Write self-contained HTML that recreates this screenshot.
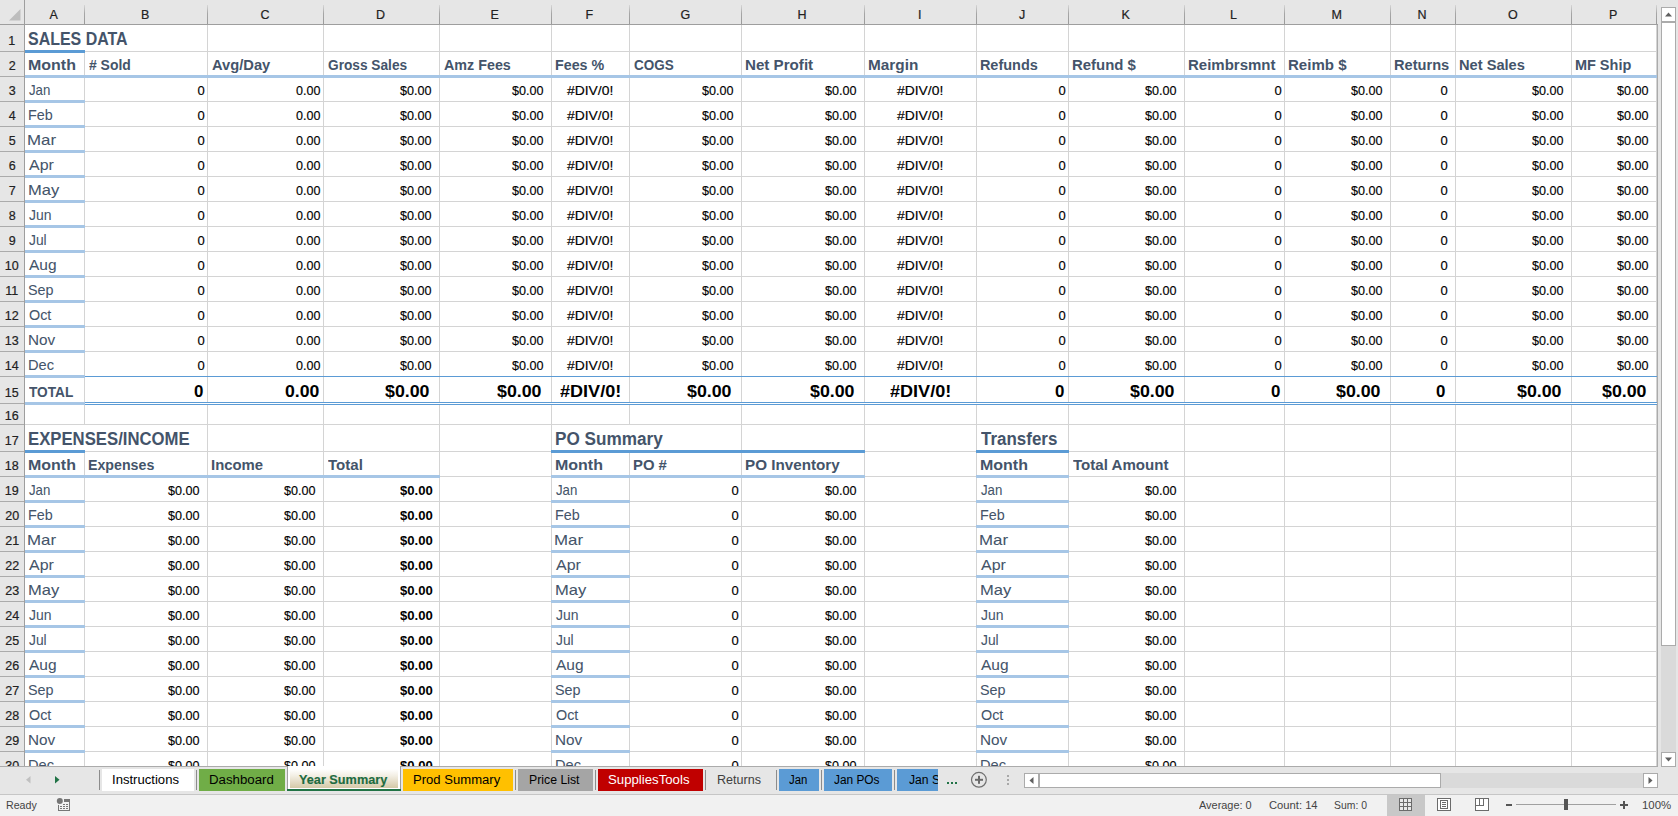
<!DOCTYPE html><html><head><meta charset="utf-8"><style>
*{margin:0;padding:0;box-sizing:border-box}
html,body{width:1678px;height:816px;overflow:hidden;background:#E6E6E6;font-family:"Liberation Sans", sans-serif}
body{position:relative}
div{position:absolute}
svg{position:absolute}
.t{position:absolute;white-space:nowrap;line-height:1;display:block;transform-origin:0 0}
</style></head><body><div style="left:25px;top:25px;width:1632px;height:741px;background:#fff"></div>
<div style="left:84px;top:25px;width:1px;height:741px;background:#D4D4D4"></div>
<div style="left:207px;top:25px;width:1px;height:741px;background:#D4D4D4"></div>
<div style="left:323px;top:25px;width:1px;height:741px;background:#D4D4D4"></div>
<div style="left:439px;top:25px;width:1px;height:741px;background:#D4D4D4"></div>
<div style="left:551px;top:25px;width:1px;height:741px;background:#D4D4D4"></div>
<div style="left:629px;top:25px;width:1px;height:741px;background:#D4D4D4"></div>
<div style="left:741px;top:25px;width:1px;height:741px;background:#D4D4D4"></div>
<div style="left:864px;top:25px;width:1px;height:741px;background:#D4D4D4"></div>
<div style="left:976px;top:25px;width:1px;height:741px;background:#D4D4D4"></div>
<div style="left:1068px;top:25px;width:1px;height:741px;background:#D4D4D4"></div>
<div style="left:1184px;top:25px;width:1px;height:741px;background:#D4D4D4"></div>
<div style="left:1284px;top:25px;width:1px;height:741px;background:#D4D4D4"></div>
<div style="left:1390px;top:25px;width:1px;height:741px;background:#D4D4D4"></div>
<div style="left:1455px;top:25px;width:1px;height:741px;background:#D4D4D4"></div>
<div style="left:1571px;top:25px;width:1px;height:741px;background:#D4D4D4"></div>
<div style="left:1656px;top:25px;width:1px;height:741px;background:#D4D4D4"></div>
<div style="left:25px;top:51px;width:1632px;height:1px;background:#D4D4D4"></div>
<div style="left:25px;top:76px;width:1632px;height:1px;background:#D4D4D4"></div>
<div style="left:25px;top:101px;width:1632px;height:1px;background:#D4D4D4"></div>
<div style="left:25px;top:126px;width:1632px;height:1px;background:#D4D4D4"></div>
<div style="left:25px;top:151px;width:1632px;height:1px;background:#D4D4D4"></div>
<div style="left:25px;top:176px;width:1632px;height:1px;background:#D4D4D4"></div>
<div style="left:25px;top:201px;width:1632px;height:1px;background:#D4D4D4"></div>
<div style="left:25px;top:226px;width:1632px;height:1px;background:#D4D4D4"></div>
<div style="left:25px;top:251px;width:1632px;height:1px;background:#D4D4D4"></div>
<div style="left:25px;top:276px;width:1632px;height:1px;background:#D4D4D4"></div>
<div style="left:25px;top:301px;width:1632px;height:1px;background:#D4D4D4"></div>
<div style="left:25px;top:326px;width:1632px;height:1px;background:#D4D4D4"></div>
<div style="left:25px;top:351px;width:1632px;height:1px;background:#D4D4D4"></div>
<div style="left:25px;top:376px;width:1632px;height:1px;background:#D4D4D4"></div>
<div style="left:25px;top:403px;width:1632px;height:1px;background:#D4D4D4"></div>
<div style="left:25px;top:424px;width:1632px;height:1px;background:#D4D4D4"></div>
<div style="left:25px;top:451px;width:1632px;height:1px;background:#D4D4D4"></div>
<div style="left:25px;top:476px;width:1632px;height:1px;background:#D4D4D4"></div>
<div style="left:25px;top:501px;width:1632px;height:1px;background:#D4D4D4"></div>
<div style="left:25px;top:526px;width:1632px;height:1px;background:#D4D4D4"></div>
<div style="left:25px;top:551px;width:1632px;height:1px;background:#D4D4D4"></div>
<div style="left:25px;top:576px;width:1632px;height:1px;background:#D4D4D4"></div>
<div style="left:25px;top:601px;width:1632px;height:1px;background:#D4D4D4"></div>
<div style="left:25px;top:626px;width:1632px;height:1px;background:#D4D4D4"></div>
<div style="left:25px;top:651px;width:1632px;height:1px;background:#D4D4D4"></div>
<div style="left:25px;top:676px;width:1632px;height:1px;background:#D4D4D4"></div>
<div style="left:25px;top:701px;width:1632px;height:1px;background:#D4D4D4"></div>
<div style="left:25px;top:726px;width:1632px;height:1px;background:#D4D4D4"></div>
<div style="left:25px;top:751px;width:1632px;height:1px;background:#D4D4D4"></div>
<div style="left:1657px;top:24px;width:1px;height:742px;background:#ABABAB"></div>
<div style="left:84px;top:25px;width:1px;height:25px;background:#fff"></div>
<div style="left:84px;top:425px;width:1px;height:25px;background:#fff"></div>
<div style="left:629px;top:425px;width:1px;height:25px;background:#fff"></div>
<div style="left:0px;top:0px;width:1657px;height:24px;background:#E6E6E6"></div>
<div style="left:0px;top:24px;width:1658px;height:1px;background:#9E9E9E"></div>
<svg style="left:0;top:0" width="24" height="24"><polygon points="20.5,9 20.5,20.5 9,20.5" fill="#BDBDBD"/></svg>
<div style="left:24px;top:0px;width:1px;height:24px;background:#9E9E9E"></div>
<div style="left:84px;top:5px;width:1px;height:19px;background:linear-gradient(#D6D6D6,#A6A6A6 45%,#9A9A9A)"></div>
<div style="left:207px;top:5px;width:1px;height:19px;background:linear-gradient(#D6D6D6,#A6A6A6 45%,#9A9A9A)"></div>
<div style="left:323px;top:5px;width:1px;height:19px;background:linear-gradient(#D6D6D6,#A6A6A6 45%,#9A9A9A)"></div>
<div style="left:439px;top:5px;width:1px;height:19px;background:linear-gradient(#D6D6D6,#A6A6A6 45%,#9A9A9A)"></div>
<div style="left:551px;top:5px;width:1px;height:19px;background:linear-gradient(#D6D6D6,#A6A6A6 45%,#9A9A9A)"></div>
<div style="left:629px;top:5px;width:1px;height:19px;background:linear-gradient(#D6D6D6,#A6A6A6 45%,#9A9A9A)"></div>
<div style="left:741px;top:5px;width:1px;height:19px;background:linear-gradient(#D6D6D6,#A6A6A6 45%,#9A9A9A)"></div>
<div style="left:864px;top:5px;width:1px;height:19px;background:linear-gradient(#D6D6D6,#A6A6A6 45%,#9A9A9A)"></div>
<div style="left:976px;top:5px;width:1px;height:19px;background:linear-gradient(#D6D6D6,#A6A6A6 45%,#9A9A9A)"></div>
<div style="left:1068px;top:5px;width:1px;height:19px;background:linear-gradient(#D6D6D6,#A6A6A6 45%,#9A9A9A)"></div>
<div style="left:1184px;top:5px;width:1px;height:19px;background:linear-gradient(#D6D6D6,#A6A6A6 45%,#9A9A9A)"></div>
<div style="left:1284px;top:5px;width:1px;height:19px;background:linear-gradient(#D6D6D6,#A6A6A6 45%,#9A9A9A)"></div>
<div style="left:1390px;top:5px;width:1px;height:19px;background:linear-gradient(#D6D6D6,#A6A6A6 45%,#9A9A9A)"></div>
<div style="left:1455px;top:5px;width:1px;height:19px;background:linear-gradient(#D6D6D6,#A6A6A6 45%,#9A9A9A)"></div>
<div style="left:1571px;top:5px;width:1px;height:19px;background:linear-gradient(#D6D6D6,#A6A6A6 45%,#9A9A9A)"></div>
<div style="left:1656px;top:5px;width:1px;height:19px;background:linear-gradient(#D6D6D6,#A6A6A6 45%,#9A9A9A)"></div>
<span class="t" style="left:49.50px;top:9.12px;font-size:12.5px;color:#222;-webkit-text-stroke:0.2px #222;">A</span>
<span class="t" style="left:141.00px;top:9.12px;font-size:12.5px;color:#222;-webkit-text-stroke:0.2px #222;">B</span>
<span class="t" style="left:260.50px;top:9.12px;font-size:12.5px;color:#222;-webkit-text-stroke:0.2px #222;">C</span>
<span class="t" style="left:376.00px;top:9.12px;font-size:12.5px;color:#222;-webkit-text-stroke:0.2px #222;">D</span>
<span class="t" style="left:490.50px;top:9.12px;font-size:12.5px;color:#222;-webkit-text-stroke:0.2px #222;">E</span>
<span class="t" style="left:585.50px;top:9.12px;font-size:12.5px;color:#222;-webkit-text-stroke:0.2px #222;">F</span>
<span class="t" style="left:680.50px;top:9.12px;font-size:12.5px;color:#222;-webkit-text-stroke:0.2px #222;">G</span>
<span class="t" style="left:797.50px;top:9.12px;font-size:12.5px;color:#222;-webkit-text-stroke:0.2px #222;">H</span>
<span class="t" style="left:918.00px;top:9.12px;font-size:12.5px;color:#222;-webkit-text-stroke:0.2px #222;">I</span>
<span class="t" style="left:1019.00px;top:9.12px;font-size:12.5px;color:#222;-webkit-text-stroke:0.2px #222;">J</span>
<span class="t" style="left:1121.50px;top:9.12px;font-size:12.5px;color:#222;-webkit-text-stroke:0.2px #222;">K</span>
<span class="t" style="left:1230.00px;top:9.12px;font-size:12.5px;color:#222;-webkit-text-stroke:0.2px #222;">L</span>
<span class="t" style="left:1331.50px;top:9.12px;font-size:12.5px;color:#222;-webkit-text-stroke:0.2px #222;">M</span>
<span class="t" style="left:1417.50px;top:9.12px;font-size:12.5px;color:#222;-webkit-text-stroke:0.2px #222;">N</span>
<span class="t" style="left:1508.00px;top:9.12px;font-size:12.5px;color:#222;-webkit-text-stroke:0.2px #222;">O</span>
<span class="t" style="left:1609.00px;top:9.12px;font-size:12.5px;color:#222;-webkit-text-stroke:0.2px #222;">P</span>
<div style="left:0px;top:25px;width:24px;height:741px;background:#E6E6E6"></div>
<div style="left:24px;top:0px;width:1px;height:766px;background:#9E9E9E"></div>
<div style="left:0px;top:51px;width:24px;height:1px;background:#ABABAB"></div>
<div style="left:0px;top:76px;width:24px;height:1px;background:#ABABAB"></div>
<div style="left:0px;top:101px;width:24px;height:1px;background:#ABABAB"></div>
<div style="left:0px;top:126px;width:24px;height:1px;background:#ABABAB"></div>
<div style="left:0px;top:151px;width:24px;height:1px;background:#ABABAB"></div>
<div style="left:0px;top:176px;width:24px;height:1px;background:#ABABAB"></div>
<div style="left:0px;top:201px;width:24px;height:1px;background:#ABABAB"></div>
<div style="left:0px;top:226px;width:24px;height:1px;background:#ABABAB"></div>
<div style="left:0px;top:251px;width:24px;height:1px;background:#ABABAB"></div>
<div style="left:0px;top:276px;width:24px;height:1px;background:#ABABAB"></div>
<div style="left:0px;top:301px;width:24px;height:1px;background:#ABABAB"></div>
<div style="left:0px;top:326px;width:24px;height:1px;background:#ABABAB"></div>
<div style="left:0px;top:351px;width:24px;height:1px;background:#ABABAB"></div>
<div style="left:0px;top:376px;width:24px;height:1px;background:#ABABAB"></div>
<div style="left:0px;top:403px;width:24px;height:1px;background:#ABABAB"></div>
<div style="left:0px;top:424px;width:24px;height:1px;background:#ABABAB"></div>
<div style="left:0px;top:451px;width:24px;height:1px;background:#ABABAB"></div>
<div style="left:0px;top:476px;width:24px;height:1px;background:#ABABAB"></div>
<div style="left:0px;top:501px;width:24px;height:1px;background:#ABABAB"></div>
<div style="left:0px;top:526px;width:24px;height:1px;background:#ABABAB"></div>
<div style="left:0px;top:551px;width:24px;height:1px;background:#ABABAB"></div>
<div style="left:0px;top:576px;width:24px;height:1px;background:#ABABAB"></div>
<div style="left:0px;top:601px;width:24px;height:1px;background:#ABABAB"></div>
<div style="left:0px;top:626px;width:24px;height:1px;background:#ABABAB"></div>
<div style="left:0px;top:651px;width:24px;height:1px;background:#ABABAB"></div>
<div style="left:0px;top:676px;width:24px;height:1px;background:#ABABAB"></div>
<div style="left:0px;top:701px;width:24px;height:1px;background:#ABABAB"></div>
<div style="left:0px;top:726px;width:24px;height:1px;background:#ABABAB"></div>
<div style="left:0px;top:751px;width:24px;height:1px;background:#ABABAB"></div>
<span class="t" style="left:8.20px;top:34.72px;font-size:12.5px;color:#222;-webkit-text-stroke:0.2px #222;">1</span>
<span class="t" style="left:8.70px;top:59.72px;font-size:12.5px;color:#222;-webkit-text-stroke:0.2px #222;">2</span>
<span class="t" style="left:8.70px;top:84.72px;font-size:12.5px;color:#222;-webkit-text-stroke:0.2px #222;">3</span>
<span class="t" style="left:8.70px;top:109.72px;font-size:12.5px;color:#222;-webkit-text-stroke:0.2px #222;">4</span>
<span class="t" style="left:8.70px;top:134.72px;font-size:12.5px;color:#222;-webkit-text-stroke:0.2px #222;">5</span>
<span class="t" style="left:8.70px;top:159.72px;font-size:12.5px;color:#222;-webkit-text-stroke:0.2px #222;">6</span>
<span class="t" style="left:8.70px;top:184.72px;font-size:12.5px;color:#222;-webkit-text-stroke:0.2px #222;">7</span>
<span class="t" style="left:8.70px;top:209.72px;font-size:12.5px;color:#222;-webkit-text-stroke:0.2px #222;">8</span>
<span class="t" style="left:8.70px;top:234.72px;font-size:12.5px;color:#222;-webkit-text-stroke:0.2px #222;">9</span>
<span class="t" style="left:4.70px;top:259.72px;font-size:12.5px;color:#222;-webkit-text-stroke:0.2px #222;">10</span>
<span class="t" style="left:5.20px;top:284.72px;font-size:12.5px;color:#222;-webkit-text-stroke:0.2px #222;">11</span>
<span class="t" style="left:4.70px;top:309.72px;font-size:12.5px;color:#222;-webkit-text-stroke:0.2px #222;">12</span>
<span class="t" style="left:4.70px;top:334.72px;font-size:12.5px;color:#222;-webkit-text-stroke:0.2px #222;">13</span>
<span class="t" style="left:4.70px;top:359.72px;font-size:12.5px;color:#222;-webkit-text-stroke:0.2px #222;">14</span>
<span class="t" style="left:4.70px;top:386.72px;font-size:12.5px;color:#222;-webkit-text-stroke:0.2px #222;">15</span>
<span class="t" style="left:4.70px;top:410.02px;font-size:12.5px;color:#222;-webkit-text-stroke:0.2px #222;">16</span>
<span class="t" style="left:4.70px;top:434.72px;font-size:12.5px;color:#222;-webkit-text-stroke:0.2px #222;">17</span>
<span class="t" style="left:4.70px;top:459.72px;font-size:12.5px;color:#222;-webkit-text-stroke:0.2px #222;">18</span>
<span class="t" style="left:4.70px;top:484.72px;font-size:12.5px;color:#222;-webkit-text-stroke:0.2px #222;">19</span>
<span class="t" style="left:5.20px;top:509.72px;font-size:12.5px;color:#222;-webkit-text-stroke:0.2px #222;">20</span>
<span class="t" style="left:5.20px;top:534.72px;font-size:12.5px;color:#222;-webkit-text-stroke:0.2px #222;">21</span>
<span class="t" style="left:5.20px;top:559.72px;font-size:12.5px;color:#222;-webkit-text-stroke:0.2px #222;">22</span>
<span class="t" style="left:5.20px;top:584.72px;font-size:12.5px;color:#222;-webkit-text-stroke:0.2px #222;">23</span>
<span class="t" style="left:5.20px;top:609.72px;font-size:12.5px;color:#222;-webkit-text-stroke:0.2px #222;">24</span>
<span class="t" style="left:5.20px;top:634.72px;font-size:12.5px;color:#222;-webkit-text-stroke:0.2px #222;">25</span>
<span class="t" style="left:5.20px;top:659.72px;font-size:12.5px;color:#222;-webkit-text-stroke:0.2px #222;">26</span>
<span class="t" style="left:5.20px;top:684.72px;font-size:12.5px;color:#222;-webkit-text-stroke:0.2px #222;">27</span>
<span class="t" style="left:5.20px;top:709.72px;font-size:12.5px;color:#222;-webkit-text-stroke:0.2px #222;">28</span>
<span class="t" style="left:5.20px;top:734.72px;font-size:12.5px;color:#222;-webkit-text-stroke:0.2px #222;">29</span>
<span class="t" style="left:5.20px;top:759.72px;font-size:12.5px;color:#222;-webkit-text-stroke:0.2px #222;">30</span>
<span class="t" style="left:28.30px;top:29.76px;font-size:18px;font-weight:bold;color:#44546A;transform:scaleX(0.8866);">SALES DATA</span>
<div style="left:25px;top:50px;width:60px;height:3px;background:#5B9BD5"></div>
<span class="t" style="left:27.80px;top:57.73px;font-size:14.5px;font-weight:bold;color:#44546A;transform:scaleX(1.1024);">Month</span>
<span class="t" style="left:88.90px;top:57.73px;font-size:14.5px;font-weight:bold;color:#44546A;transform:scaleX(0.9605);"># Sold</span>
<span class="t" style="left:211.90px;top:57.73px;font-size:14.5px;font-weight:bold;color:#44546A;transform:scaleX(1.0138);">Avg/Day</span>
<span class="t" style="left:327.90px;top:57.73px;font-size:14.5px;font-weight:bold;color:#44546A;transform:scaleX(0.9440);">Gross Sales</span>
<span class="t" style="left:443.90px;top:57.73px;font-size:14.5px;font-weight:bold;color:#44546A;transform:scaleX(0.9868);">Amz Fees</span>
<span class="t" style="left:554.92px;top:57.73px;font-size:14.5px;font-weight:bold;color:#44546A;transform:scaleX(0.9837);">Fees %</span>
<span class="t" style="left:633.90px;top:57.73px;font-size:14.5px;font-weight:bold;color:#44546A;transform:scaleX(0.9286);">COGS</span>
<span class="t" style="left:744.86px;top:57.73px;font-size:14.5px;font-weight:bold;color:#44546A;transform:scaleX(1.0446);">Net Profit</span>
<span class="t" style="left:867.84px;top:57.73px;font-size:14.5px;font-weight:bold;color:#44546A;transform:scaleX(1.0587);">Margin</span>
<span class="t" style="left:979.90px;top:57.73px;font-size:14.5px;font-weight:bold;color:#44546A;">Refunds</span>
<span class="t" style="left:1071.87px;top:57.73px;font-size:14.5px;font-weight:bold;color:#44546A;transform:scaleX(1.0295);">Refund $</span>
<span class="t" style="left:1187.87px;top:57.73px;font-size:14.5px;font-weight:bold;color:#44546A;transform:scaleX(1.0345);">Reimbrsmnt</span>
<span class="t" style="left:1287.86px;top:57.73px;font-size:14.5px;font-weight:bold;color:#44546A;transform:scaleX(1.0382);">Reimb $</span>
<span class="t" style="left:1393.89px;top:57.73px;font-size:14.5px;font-weight:bold;color:#44546A;transform:scaleX(1.0074);">Returns</span>
<span class="t" style="left:1458.89px;top:57.73px;font-size:14.5px;font-weight:bold;color:#44546A;transform:scaleX(1.0094);">Net Sales</span>
<span class="t" style="left:1574.90px;top:57.73px;font-size:14.5px;font-weight:bold;color:#44546A;">MF Ship</span>
<div style="left:25px;top:75px;width:1632px;height:3px;background:#A6C6E6"></div>
<span class="t" style="left:28.60px;top:82.30px;font-size:15px;color:#44546A;-webkit-text-stroke:0.05px #44546A;transform:scaleX(0.8833);">Jan</span>
<div style="left:25px;top:100px;width:60px;height:3px;background:#A6C6E6"></div>
<span class="t" style="left:197.40px;top:84.00px;font-size:13px;color:#000;-webkit-text-stroke:0.15px #000;">0</span>
<span class="t" style="left:296.30px;top:84.00px;font-size:13px;color:#000;-webkit-text-stroke:0.15px #000;transform:scaleX(0.9640);">0.00</span>
<span class="t" style="left:400.40px;top:84.00px;font-size:13px;color:#000;-webkit-text-stroke:0.15px #000;transform:scaleX(0.9688);">$0.00</span>
<span class="t" style="left:512.40px;top:84.00px;font-size:13px;color:#000;-webkit-text-stroke:0.15px #000;transform:scaleX(0.9688);">$0.00</span>
<span class="t" style="left:567.35px;top:84.00px;font-size:13px;color:#000;-webkit-text-stroke:0.15px #000;transform:scaleX(1.0674);">#DIV/0!</span>
<span class="t" style="left:702.40px;top:84.00px;font-size:13px;color:#000;-webkit-text-stroke:0.15px #000;transform:scaleX(0.9688);">$0.00</span>
<span class="t" style="left:825.40px;top:84.00px;font-size:13px;color:#000;-webkit-text-stroke:0.15px #000;transform:scaleX(0.9688);">$0.00</span>
<span class="t" style="left:897.35px;top:84.00px;font-size:13px;color:#000;-webkit-text-stroke:0.15px #000;transform:scaleX(1.0674);">#DIV/0!</span>
<span class="t" style="left:1058.40px;top:84.00px;font-size:13px;color:#000;-webkit-text-stroke:0.15px #000;">0</span>
<span class="t" style="left:1145.40px;top:84.00px;font-size:13px;color:#000;-webkit-text-stroke:0.15px #000;transform:scaleX(0.9688);">$0.00</span>
<span class="t" style="left:1274.40px;top:84.00px;font-size:13px;color:#000;-webkit-text-stroke:0.15px #000;">0</span>
<span class="t" style="left:1351.40px;top:84.00px;font-size:13px;color:#000;-webkit-text-stroke:0.15px #000;transform:scaleX(0.9688);">$0.00</span>
<span class="t" style="left:1440.60px;top:84.00px;font-size:13px;color:#000;-webkit-text-stroke:0.15px #000;">0</span>
<span class="t" style="left:1532.40px;top:84.00px;font-size:13px;color:#000;-webkit-text-stroke:0.15px #000;transform:scaleX(0.9688);">$0.00</span>
<span class="t" style="left:1617.40px;top:84.00px;font-size:13px;color:#000;-webkit-text-stroke:0.15px #000;transform:scaleX(0.9688);">$0.00</span>
<span class="t" style="left:27.64px;top:107.30px;font-size:15px;color:#44546A;-webkit-text-stroke:0.05px #44546A;transform:scaleX(0.9560);">Feb</span>
<div style="left:25px;top:125px;width:60px;height:3px;background:#A6C6E6"></div>
<span class="t" style="left:197.40px;top:109.00px;font-size:13px;color:#000;-webkit-text-stroke:0.15px #000;">0</span>
<span class="t" style="left:296.30px;top:109.00px;font-size:13px;color:#000;-webkit-text-stroke:0.15px #000;transform:scaleX(0.9640);">0.00</span>
<span class="t" style="left:400.40px;top:109.00px;font-size:13px;color:#000;-webkit-text-stroke:0.15px #000;transform:scaleX(0.9688);">$0.00</span>
<span class="t" style="left:512.40px;top:109.00px;font-size:13px;color:#000;-webkit-text-stroke:0.15px #000;transform:scaleX(0.9688);">$0.00</span>
<span class="t" style="left:567.35px;top:109.00px;font-size:13px;color:#000;-webkit-text-stroke:0.15px #000;transform:scaleX(1.0674);">#DIV/0!</span>
<span class="t" style="left:702.40px;top:109.00px;font-size:13px;color:#000;-webkit-text-stroke:0.15px #000;transform:scaleX(0.9688);">$0.00</span>
<span class="t" style="left:825.40px;top:109.00px;font-size:13px;color:#000;-webkit-text-stroke:0.15px #000;transform:scaleX(0.9688);">$0.00</span>
<span class="t" style="left:897.35px;top:109.00px;font-size:13px;color:#000;-webkit-text-stroke:0.15px #000;transform:scaleX(1.0674);">#DIV/0!</span>
<span class="t" style="left:1058.40px;top:109.00px;font-size:13px;color:#000;-webkit-text-stroke:0.15px #000;">0</span>
<span class="t" style="left:1145.40px;top:109.00px;font-size:13px;color:#000;-webkit-text-stroke:0.15px #000;transform:scaleX(0.9688);">$0.00</span>
<span class="t" style="left:1274.40px;top:109.00px;font-size:13px;color:#000;-webkit-text-stroke:0.15px #000;">0</span>
<span class="t" style="left:1351.40px;top:109.00px;font-size:13px;color:#000;-webkit-text-stroke:0.15px #000;transform:scaleX(0.9688);">$0.00</span>
<span class="t" style="left:1440.60px;top:109.00px;font-size:13px;color:#000;-webkit-text-stroke:0.15px #000;">0</span>
<span class="t" style="left:1532.40px;top:109.00px;font-size:13px;color:#000;-webkit-text-stroke:0.15px #000;transform:scaleX(0.9688);">$0.00</span>
<span class="t" style="left:1617.40px;top:109.00px;font-size:13px;color:#000;-webkit-text-stroke:0.15px #000;transform:scaleX(0.9688);">$0.00</span>
<span class="t" style="left:27.48px;top:132.30px;font-size:15px;color:#44546A;-webkit-text-stroke:0.05px #44546A;transform:scaleX(1.1240);">Mar</span>
<div style="left:25px;top:150px;width:60px;height:3px;background:#A6C6E6"></div>
<span class="t" style="left:197.40px;top:134.00px;font-size:13px;color:#000;-webkit-text-stroke:0.15px #000;">0</span>
<span class="t" style="left:296.30px;top:134.00px;font-size:13px;color:#000;-webkit-text-stroke:0.15px #000;transform:scaleX(0.9640);">0.00</span>
<span class="t" style="left:400.40px;top:134.00px;font-size:13px;color:#000;-webkit-text-stroke:0.15px #000;transform:scaleX(0.9688);">$0.00</span>
<span class="t" style="left:512.40px;top:134.00px;font-size:13px;color:#000;-webkit-text-stroke:0.15px #000;transform:scaleX(0.9688);">$0.00</span>
<span class="t" style="left:567.35px;top:134.00px;font-size:13px;color:#000;-webkit-text-stroke:0.15px #000;transform:scaleX(1.0674);">#DIV/0!</span>
<span class="t" style="left:702.40px;top:134.00px;font-size:13px;color:#000;-webkit-text-stroke:0.15px #000;transform:scaleX(0.9688);">$0.00</span>
<span class="t" style="left:825.40px;top:134.00px;font-size:13px;color:#000;-webkit-text-stroke:0.15px #000;transform:scaleX(0.9688);">$0.00</span>
<span class="t" style="left:897.35px;top:134.00px;font-size:13px;color:#000;-webkit-text-stroke:0.15px #000;transform:scaleX(1.0674);">#DIV/0!</span>
<span class="t" style="left:1058.40px;top:134.00px;font-size:13px;color:#000;-webkit-text-stroke:0.15px #000;">0</span>
<span class="t" style="left:1145.40px;top:134.00px;font-size:13px;color:#000;-webkit-text-stroke:0.15px #000;transform:scaleX(0.9688);">$0.00</span>
<span class="t" style="left:1274.40px;top:134.00px;font-size:13px;color:#000;-webkit-text-stroke:0.15px #000;">0</span>
<span class="t" style="left:1351.40px;top:134.00px;font-size:13px;color:#000;-webkit-text-stroke:0.15px #000;transform:scaleX(0.9688);">$0.00</span>
<span class="t" style="left:1440.60px;top:134.00px;font-size:13px;color:#000;-webkit-text-stroke:0.15px #000;">0</span>
<span class="t" style="left:1532.40px;top:134.00px;font-size:13px;color:#000;-webkit-text-stroke:0.15px #000;transform:scaleX(0.9688);">$0.00</span>
<span class="t" style="left:1617.40px;top:134.00px;font-size:13px;color:#000;-webkit-text-stroke:0.15px #000;transform:scaleX(0.9688);">$0.00</span>
<span class="t" style="left:28.60px;top:157.30px;font-size:15px;color:#44546A;-webkit-text-stroke:0.05px #44546A;transform:scaleX(1.0652);">Apr</span>
<div style="left:25px;top:175px;width:60px;height:3px;background:#A6C6E6"></div>
<span class="t" style="left:197.40px;top:159.00px;font-size:13px;color:#000;-webkit-text-stroke:0.15px #000;">0</span>
<span class="t" style="left:296.30px;top:159.00px;font-size:13px;color:#000;-webkit-text-stroke:0.15px #000;transform:scaleX(0.9640);">0.00</span>
<span class="t" style="left:400.40px;top:159.00px;font-size:13px;color:#000;-webkit-text-stroke:0.15px #000;transform:scaleX(0.9688);">$0.00</span>
<span class="t" style="left:512.40px;top:159.00px;font-size:13px;color:#000;-webkit-text-stroke:0.15px #000;transform:scaleX(0.9688);">$0.00</span>
<span class="t" style="left:567.35px;top:159.00px;font-size:13px;color:#000;-webkit-text-stroke:0.15px #000;transform:scaleX(1.0674);">#DIV/0!</span>
<span class="t" style="left:702.40px;top:159.00px;font-size:13px;color:#000;-webkit-text-stroke:0.15px #000;transform:scaleX(0.9688);">$0.00</span>
<span class="t" style="left:825.40px;top:159.00px;font-size:13px;color:#000;-webkit-text-stroke:0.15px #000;transform:scaleX(0.9688);">$0.00</span>
<span class="t" style="left:897.35px;top:159.00px;font-size:13px;color:#000;-webkit-text-stroke:0.15px #000;transform:scaleX(1.0674);">#DIV/0!</span>
<span class="t" style="left:1058.40px;top:159.00px;font-size:13px;color:#000;-webkit-text-stroke:0.15px #000;">0</span>
<span class="t" style="left:1145.40px;top:159.00px;font-size:13px;color:#000;-webkit-text-stroke:0.15px #000;transform:scaleX(0.9688);">$0.00</span>
<span class="t" style="left:1274.40px;top:159.00px;font-size:13px;color:#000;-webkit-text-stroke:0.15px #000;">0</span>
<span class="t" style="left:1351.40px;top:159.00px;font-size:13px;color:#000;-webkit-text-stroke:0.15px #000;transform:scaleX(0.9688);">$0.00</span>
<span class="t" style="left:1440.60px;top:159.00px;font-size:13px;color:#000;-webkit-text-stroke:0.15px #000;">0</span>
<span class="t" style="left:1532.40px;top:159.00px;font-size:13px;color:#000;-webkit-text-stroke:0.15px #000;transform:scaleX(0.9688);">$0.00</span>
<span class="t" style="left:1617.40px;top:159.00px;font-size:13px;color:#000;-webkit-text-stroke:0.15px #000;transform:scaleX(0.9688);">$0.00</span>
<span class="t" style="left:27.50px;top:182.30px;font-size:15px;color:#44546A;-webkit-text-stroke:0.05px #44546A;transform:scaleX(1.1037);">May</span>
<div style="left:25px;top:200px;width:60px;height:3px;background:#A6C6E6"></div>
<span class="t" style="left:197.40px;top:184.00px;font-size:13px;color:#000;-webkit-text-stroke:0.15px #000;">0</span>
<span class="t" style="left:296.30px;top:184.00px;font-size:13px;color:#000;-webkit-text-stroke:0.15px #000;transform:scaleX(0.9640);">0.00</span>
<span class="t" style="left:400.40px;top:184.00px;font-size:13px;color:#000;-webkit-text-stroke:0.15px #000;transform:scaleX(0.9688);">$0.00</span>
<span class="t" style="left:512.40px;top:184.00px;font-size:13px;color:#000;-webkit-text-stroke:0.15px #000;transform:scaleX(0.9688);">$0.00</span>
<span class="t" style="left:567.35px;top:184.00px;font-size:13px;color:#000;-webkit-text-stroke:0.15px #000;transform:scaleX(1.0674);">#DIV/0!</span>
<span class="t" style="left:702.40px;top:184.00px;font-size:13px;color:#000;-webkit-text-stroke:0.15px #000;transform:scaleX(0.9688);">$0.00</span>
<span class="t" style="left:825.40px;top:184.00px;font-size:13px;color:#000;-webkit-text-stroke:0.15px #000;transform:scaleX(0.9688);">$0.00</span>
<span class="t" style="left:897.35px;top:184.00px;font-size:13px;color:#000;-webkit-text-stroke:0.15px #000;transform:scaleX(1.0674);">#DIV/0!</span>
<span class="t" style="left:1058.40px;top:184.00px;font-size:13px;color:#000;-webkit-text-stroke:0.15px #000;">0</span>
<span class="t" style="left:1145.40px;top:184.00px;font-size:13px;color:#000;-webkit-text-stroke:0.15px #000;transform:scaleX(0.9688);">$0.00</span>
<span class="t" style="left:1274.40px;top:184.00px;font-size:13px;color:#000;-webkit-text-stroke:0.15px #000;">0</span>
<span class="t" style="left:1351.40px;top:184.00px;font-size:13px;color:#000;-webkit-text-stroke:0.15px #000;transform:scaleX(0.9688);">$0.00</span>
<span class="t" style="left:1440.60px;top:184.00px;font-size:13px;color:#000;-webkit-text-stroke:0.15px #000;">0</span>
<span class="t" style="left:1532.40px;top:184.00px;font-size:13px;color:#000;-webkit-text-stroke:0.15px #000;transform:scaleX(0.9688);">$0.00</span>
<span class="t" style="left:1617.40px;top:184.00px;font-size:13px;color:#000;-webkit-text-stroke:0.15px #000;transform:scaleX(0.9688);">$0.00</span>
<span class="t" style="left:28.60px;top:207.30px;font-size:15px;color:#44546A;-webkit-text-stroke:0.05px #44546A;transform:scaleX(0.9292);">Jun</span>
<div style="left:25px;top:225px;width:60px;height:3px;background:#A6C6E6"></div>
<span class="t" style="left:197.40px;top:209.00px;font-size:13px;color:#000;-webkit-text-stroke:0.15px #000;">0</span>
<span class="t" style="left:296.30px;top:209.00px;font-size:13px;color:#000;-webkit-text-stroke:0.15px #000;transform:scaleX(0.9640);">0.00</span>
<span class="t" style="left:400.40px;top:209.00px;font-size:13px;color:#000;-webkit-text-stroke:0.15px #000;transform:scaleX(0.9688);">$0.00</span>
<span class="t" style="left:512.40px;top:209.00px;font-size:13px;color:#000;-webkit-text-stroke:0.15px #000;transform:scaleX(0.9688);">$0.00</span>
<span class="t" style="left:567.35px;top:209.00px;font-size:13px;color:#000;-webkit-text-stroke:0.15px #000;transform:scaleX(1.0674);">#DIV/0!</span>
<span class="t" style="left:702.40px;top:209.00px;font-size:13px;color:#000;-webkit-text-stroke:0.15px #000;transform:scaleX(0.9688);">$0.00</span>
<span class="t" style="left:825.40px;top:209.00px;font-size:13px;color:#000;-webkit-text-stroke:0.15px #000;transform:scaleX(0.9688);">$0.00</span>
<span class="t" style="left:897.35px;top:209.00px;font-size:13px;color:#000;-webkit-text-stroke:0.15px #000;transform:scaleX(1.0674);">#DIV/0!</span>
<span class="t" style="left:1058.40px;top:209.00px;font-size:13px;color:#000;-webkit-text-stroke:0.15px #000;">0</span>
<span class="t" style="left:1145.40px;top:209.00px;font-size:13px;color:#000;-webkit-text-stroke:0.15px #000;transform:scaleX(0.9688);">$0.00</span>
<span class="t" style="left:1274.40px;top:209.00px;font-size:13px;color:#000;-webkit-text-stroke:0.15px #000;">0</span>
<span class="t" style="left:1351.40px;top:209.00px;font-size:13px;color:#000;-webkit-text-stroke:0.15px #000;transform:scaleX(0.9688);">$0.00</span>
<span class="t" style="left:1440.60px;top:209.00px;font-size:13px;color:#000;-webkit-text-stroke:0.15px #000;">0</span>
<span class="t" style="left:1532.40px;top:209.00px;font-size:13px;color:#000;-webkit-text-stroke:0.15px #000;transform:scaleX(0.9688);">$0.00</span>
<span class="t" style="left:1617.40px;top:209.00px;font-size:13px;color:#000;-webkit-text-stroke:0.15px #000;transform:scaleX(0.9688);">$0.00</span>
<span class="t" style="left:28.60px;top:232.30px;font-size:15px;color:#44546A;-webkit-text-stroke:0.05px #44546A;transform:scaleX(0.9211);">Jul</span>
<div style="left:25px;top:250px;width:60px;height:3px;background:#A6C6E6"></div>
<span class="t" style="left:197.40px;top:234.00px;font-size:13px;color:#000;-webkit-text-stroke:0.15px #000;">0</span>
<span class="t" style="left:296.30px;top:234.00px;font-size:13px;color:#000;-webkit-text-stroke:0.15px #000;transform:scaleX(0.9640);">0.00</span>
<span class="t" style="left:400.40px;top:234.00px;font-size:13px;color:#000;-webkit-text-stroke:0.15px #000;transform:scaleX(0.9688);">$0.00</span>
<span class="t" style="left:512.40px;top:234.00px;font-size:13px;color:#000;-webkit-text-stroke:0.15px #000;transform:scaleX(0.9688);">$0.00</span>
<span class="t" style="left:567.35px;top:234.00px;font-size:13px;color:#000;-webkit-text-stroke:0.15px #000;transform:scaleX(1.0674);">#DIV/0!</span>
<span class="t" style="left:702.40px;top:234.00px;font-size:13px;color:#000;-webkit-text-stroke:0.15px #000;transform:scaleX(0.9688);">$0.00</span>
<span class="t" style="left:825.40px;top:234.00px;font-size:13px;color:#000;-webkit-text-stroke:0.15px #000;transform:scaleX(0.9688);">$0.00</span>
<span class="t" style="left:897.35px;top:234.00px;font-size:13px;color:#000;-webkit-text-stroke:0.15px #000;transform:scaleX(1.0674);">#DIV/0!</span>
<span class="t" style="left:1058.40px;top:234.00px;font-size:13px;color:#000;-webkit-text-stroke:0.15px #000;">0</span>
<span class="t" style="left:1145.40px;top:234.00px;font-size:13px;color:#000;-webkit-text-stroke:0.15px #000;transform:scaleX(0.9688);">$0.00</span>
<span class="t" style="left:1274.40px;top:234.00px;font-size:13px;color:#000;-webkit-text-stroke:0.15px #000;">0</span>
<span class="t" style="left:1351.40px;top:234.00px;font-size:13px;color:#000;-webkit-text-stroke:0.15px #000;transform:scaleX(0.9688);">$0.00</span>
<span class="t" style="left:1440.60px;top:234.00px;font-size:13px;color:#000;-webkit-text-stroke:0.15px #000;">0</span>
<span class="t" style="left:1532.40px;top:234.00px;font-size:13px;color:#000;-webkit-text-stroke:0.15px #000;transform:scaleX(0.9688);">$0.00</span>
<span class="t" style="left:1617.40px;top:234.00px;font-size:13px;color:#000;-webkit-text-stroke:0.15px #000;transform:scaleX(0.9688);">$0.00</span>
<span class="t" style="left:28.60px;top:257.30px;font-size:15px;color:#44546A;-webkit-text-stroke:0.05px #44546A;transform:scaleX(1.0346);">Aug</span>
<div style="left:25px;top:275px;width:60px;height:3px;background:#A6C6E6"></div>
<span class="t" style="left:197.40px;top:259.00px;font-size:13px;color:#000;-webkit-text-stroke:0.15px #000;">0</span>
<span class="t" style="left:296.30px;top:259.00px;font-size:13px;color:#000;-webkit-text-stroke:0.15px #000;transform:scaleX(0.9640);">0.00</span>
<span class="t" style="left:400.40px;top:259.00px;font-size:13px;color:#000;-webkit-text-stroke:0.15px #000;transform:scaleX(0.9688);">$0.00</span>
<span class="t" style="left:512.40px;top:259.00px;font-size:13px;color:#000;-webkit-text-stroke:0.15px #000;transform:scaleX(0.9688);">$0.00</span>
<span class="t" style="left:567.35px;top:259.00px;font-size:13px;color:#000;-webkit-text-stroke:0.15px #000;transform:scaleX(1.0674);">#DIV/0!</span>
<span class="t" style="left:702.40px;top:259.00px;font-size:13px;color:#000;-webkit-text-stroke:0.15px #000;transform:scaleX(0.9688);">$0.00</span>
<span class="t" style="left:825.40px;top:259.00px;font-size:13px;color:#000;-webkit-text-stroke:0.15px #000;transform:scaleX(0.9688);">$0.00</span>
<span class="t" style="left:897.35px;top:259.00px;font-size:13px;color:#000;-webkit-text-stroke:0.15px #000;transform:scaleX(1.0674);">#DIV/0!</span>
<span class="t" style="left:1058.40px;top:259.00px;font-size:13px;color:#000;-webkit-text-stroke:0.15px #000;">0</span>
<span class="t" style="left:1145.40px;top:259.00px;font-size:13px;color:#000;-webkit-text-stroke:0.15px #000;transform:scaleX(0.9688);">$0.00</span>
<span class="t" style="left:1274.40px;top:259.00px;font-size:13px;color:#000;-webkit-text-stroke:0.15px #000;">0</span>
<span class="t" style="left:1351.40px;top:259.00px;font-size:13px;color:#000;-webkit-text-stroke:0.15px #000;transform:scaleX(0.9688);">$0.00</span>
<span class="t" style="left:1440.60px;top:259.00px;font-size:13px;color:#000;-webkit-text-stroke:0.15px #000;">0</span>
<span class="t" style="left:1532.40px;top:259.00px;font-size:13px;color:#000;-webkit-text-stroke:0.15px #000;transform:scaleX(0.9688);">$0.00</span>
<span class="t" style="left:1617.40px;top:259.00px;font-size:13px;color:#000;-webkit-text-stroke:0.15px #000;transform:scaleX(0.9688);">$0.00</span>
<span class="t" style="left:27.64px;top:282.30px;font-size:15px;color:#44546A;-webkit-text-stroke:0.05px #44546A;transform:scaleX(0.9560);">Sep</span>
<div style="left:25px;top:300px;width:60px;height:3px;background:#A6C6E6"></div>
<span class="t" style="left:197.40px;top:284.00px;font-size:13px;color:#000;-webkit-text-stroke:0.15px #000;">0</span>
<span class="t" style="left:296.30px;top:284.00px;font-size:13px;color:#000;-webkit-text-stroke:0.15px #000;transform:scaleX(0.9640);">0.00</span>
<span class="t" style="left:400.40px;top:284.00px;font-size:13px;color:#000;-webkit-text-stroke:0.15px #000;transform:scaleX(0.9688);">$0.00</span>
<span class="t" style="left:512.40px;top:284.00px;font-size:13px;color:#000;-webkit-text-stroke:0.15px #000;transform:scaleX(0.9688);">$0.00</span>
<span class="t" style="left:567.35px;top:284.00px;font-size:13px;color:#000;-webkit-text-stroke:0.15px #000;transform:scaleX(1.0674);">#DIV/0!</span>
<span class="t" style="left:702.40px;top:284.00px;font-size:13px;color:#000;-webkit-text-stroke:0.15px #000;transform:scaleX(0.9688);">$0.00</span>
<span class="t" style="left:825.40px;top:284.00px;font-size:13px;color:#000;-webkit-text-stroke:0.15px #000;transform:scaleX(0.9688);">$0.00</span>
<span class="t" style="left:897.35px;top:284.00px;font-size:13px;color:#000;-webkit-text-stroke:0.15px #000;transform:scaleX(1.0674);">#DIV/0!</span>
<span class="t" style="left:1058.40px;top:284.00px;font-size:13px;color:#000;-webkit-text-stroke:0.15px #000;">0</span>
<span class="t" style="left:1145.40px;top:284.00px;font-size:13px;color:#000;-webkit-text-stroke:0.15px #000;transform:scaleX(0.9688);">$0.00</span>
<span class="t" style="left:1274.40px;top:284.00px;font-size:13px;color:#000;-webkit-text-stroke:0.15px #000;">0</span>
<span class="t" style="left:1351.40px;top:284.00px;font-size:13px;color:#000;-webkit-text-stroke:0.15px #000;transform:scaleX(0.9688);">$0.00</span>
<span class="t" style="left:1440.60px;top:284.00px;font-size:13px;color:#000;-webkit-text-stroke:0.15px #000;">0</span>
<span class="t" style="left:1532.40px;top:284.00px;font-size:13px;color:#000;-webkit-text-stroke:0.15px #000;transform:scaleX(0.9688);">$0.00</span>
<span class="t" style="left:1617.40px;top:284.00px;font-size:13px;color:#000;-webkit-text-stroke:0.15px #000;transform:scaleX(0.9688);">$0.00</span>
<span class="t" style="left:28.60px;top:307.30px;font-size:15px;color:#44546A;-webkit-text-stroke:0.05px #44546A;transform:scaleX(0.9583);">Oct</span>
<div style="left:25px;top:325px;width:60px;height:3px;background:#A6C6E6"></div>
<span class="t" style="left:197.40px;top:309.00px;font-size:13px;color:#000;-webkit-text-stroke:0.15px #000;">0</span>
<span class="t" style="left:296.30px;top:309.00px;font-size:13px;color:#000;-webkit-text-stroke:0.15px #000;transform:scaleX(0.9640);">0.00</span>
<span class="t" style="left:400.40px;top:309.00px;font-size:13px;color:#000;-webkit-text-stroke:0.15px #000;transform:scaleX(0.9688);">$0.00</span>
<span class="t" style="left:512.40px;top:309.00px;font-size:13px;color:#000;-webkit-text-stroke:0.15px #000;transform:scaleX(0.9688);">$0.00</span>
<span class="t" style="left:567.35px;top:309.00px;font-size:13px;color:#000;-webkit-text-stroke:0.15px #000;transform:scaleX(1.0674);">#DIV/0!</span>
<span class="t" style="left:702.40px;top:309.00px;font-size:13px;color:#000;-webkit-text-stroke:0.15px #000;transform:scaleX(0.9688);">$0.00</span>
<span class="t" style="left:825.40px;top:309.00px;font-size:13px;color:#000;-webkit-text-stroke:0.15px #000;transform:scaleX(0.9688);">$0.00</span>
<span class="t" style="left:897.35px;top:309.00px;font-size:13px;color:#000;-webkit-text-stroke:0.15px #000;transform:scaleX(1.0674);">#DIV/0!</span>
<span class="t" style="left:1058.40px;top:309.00px;font-size:13px;color:#000;-webkit-text-stroke:0.15px #000;">0</span>
<span class="t" style="left:1145.40px;top:309.00px;font-size:13px;color:#000;-webkit-text-stroke:0.15px #000;transform:scaleX(0.9688);">$0.00</span>
<span class="t" style="left:1274.40px;top:309.00px;font-size:13px;color:#000;-webkit-text-stroke:0.15px #000;">0</span>
<span class="t" style="left:1351.40px;top:309.00px;font-size:13px;color:#000;-webkit-text-stroke:0.15px #000;transform:scaleX(0.9688);">$0.00</span>
<span class="t" style="left:1440.60px;top:309.00px;font-size:13px;color:#000;-webkit-text-stroke:0.15px #000;">0</span>
<span class="t" style="left:1532.40px;top:309.00px;font-size:13px;color:#000;-webkit-text-stroke:0.15px #000;transform:scaleX(0.9688);">$0.00</span>
<span class="t" style="left:1617.40px;top:309.00px;font-size:13px;color:#000;-webkit-text-stroke:0.15px #000;transform:scaleX(0.9688);">$0.00</span>
<span class="t" style="left:27.58px;top:332.30px;font-size:15px;color:#44546A;-webkit-text-stroke:0.05px #44546A;transform:scaleX(1.0192);">Nov</span>
<div style="left:25px;top:350px;width:60px;height:3px;background:#A6C6E6"></div>
<span class="t" style="left:197.40px;top:334.00px;font-size:13px;color:#000;-webkit-text-stroke:0.15px #000;">0</span>
<span class="t" style="left:296.30px;top:334.00px;font-size:13px;color:#000;-webkit-text-stroke:0.15px #000;transform:scaleX(0.9640);">0.00</span>
<span class="t" style="left:400.40px;top:334.00px;font-size:13px;color:#000;-webkit-text-stroke:0.15px #000;transform:scaleX(0.9688);">$0.00</span>
<span class="t" style="left:512.40px;top:334.00px;font-size:13px;color:#000;-webkit-text-stroke:0.15px #000;transform:scaleX(0.9688);">$0.00</span>
<span class="t" style="left:567.35px;top:334.00px;font-size:13px;color:#000;-webkit-text-stroke:0.15px #000;transform:scaleX(1.0674);">#DIV/0!</span>
<span class="t" style="left:702.40px;top:334.00px;font-size:13px;color:#000;-webkit-text-stroke:0.15px #000;transform:scaleX(0.9688);">$0.00</span>
<span class="t" style="left:825.40px;top:334.00px;font-size:13px;color:#000;-webkit-text-stroke:0.15px #000;transform:scaleX(0.9688);">$0.00</span>
<span class="t" style="left:897.35px;top:334.00px;font-size:13px;color:#000;-webkit-text-stroke:0.15px #000;transform:scaleX(1.0674);">#DIV/0!</span>
<span class="t" style="left:1058.40px;top:334.00px;font-size:13px;color:#000;-webkit-text-stroke:0.15px #000;">0</span>
<span class="t" style="left:1145.40px;top:334.00px;font-size:13px;color:#000;-webkit-text-stroke:0.15px #000;transform:scaleX(0.9688);">$0.00</span>
<span class="t" style="left:1274.40px;top:334.00px;font-size:13px;color:#000;-webkit-text-stroke:0.15px #000;">0</span>
<span class="t" style="left:1351.40px;top:334.00px;font-size:13px;color:#000;-webkit-text-stroke:0.15px #000;transform:scaleX(0.9688);">$0.00</span>
<span class="t" style="left:1440.60px;top:334.00px;font-size:13px;color:#000;-webkit-text-stroke:0.15px #000;">0</span>
<span class="t" style="left:1532.40px;top:334.00px;font-size:13px;color:#000;-webkit-text-stroke:0.15px #000;transform:scaleX(0.9688);">$0.00</span>
<span class="t" style="left:1617.40px;top:334.00px;font-size:13px;color:#000;-webkit-text-stroke:0.15px #000;transform:scaleX(0.9688);">$0.00</span>
<span class="t" style="left:27.62px;top:357.30px;font-size:15px;color:#44546A;-webkit-text-stroke:0.05px #44546A;transform:scaleX(0.9760);">Dec</span>
<div style="left:25px;top:375px;width:60px;height:3px;background:#A6C6E6"></div>
<span class="t" style="left:197.40px;top:359.00px;font-size:13px;color:#000;-webkit-text-stroke:0.15px #000;">0</span>
<span class="t" style="left:296.30px;top:359.00px;font-size:13px;color:#000;-webkit-text-stroke:0.15px #000;transform:scaleX(0.9640);">0.00</span>
<span class="t" style="left:400.40px;top:359.00px;font-size:13px;color:#000;-webkit-text-stroke:0.15px #000;transform:scaleX(0.9688);">$0.00</span>
<span class="t" style="left:512.40px;top:359.00px;font-size:13px;color:#000;-webkit-text-stroke:0.15px #000;transform:scaleX(0.9688);">$0.00</span>
<span class="t" style="left:567.35px;top:359.00px;font-size:13px;color:#000;-webkit-text-stroke:0.15px #000;transform:scaleX(1.0674);">#DIV/0!</span>
<span class="t" style="left:702.40px;top:359.00px;font-size:13px;color:#000;-webkit-text-stroke:0.15px #000;transform:scaleX(0.9688);">$0.00</span>
<span class="t" style="left:825.40px;top:359.00px;font-size:13px;color:#000;-webkit-text-stroke:0.15px #000;transform:scaleX(0.9688);">$0.00</span>
<span class="t" style="left:897.35px;top:359.00px;font-size:13px;color:#000;-webkit-text-stroke:0.15px #000;transform:scaleX(1.0674);">#DIV/0!</span>
<span class="t" style="left:1058.40px;top:359.00px;font-size:13px;color:#000;-webkit-text-stroke:0.15px #000;">0</span>
<span class="t" style="left:1145.40px;top:359.00px;font-size:13px;color:#000;-webkit-text-stroke:0.15px #000;transform:scaleX(0.9688);">$0.00</span>
<span class="t" style="left:1274.40px;top:359.00px;font-size:13px;color:#000;-webkit-text-stroke:0.15px #000;">0</span>
<span class="t" style="left:1351.40px;top:359.00px;font-size:13px;color:#000;-webkit-text-stroke:0.15px #000;transform:scaleX(0.9688);">$0.00</span>
<span class="t" style="left:1440.60px;top:359.00px;font-size:13px;color:#000;-webkit-text-stroke:0.15px #000;">0</span>
<span class="t" style="left:1532.40px;top:359.00px;font-size:13px;color:#000;-webkit-text-stroke:0.15px #000;transform:scaleX(0.9688);">$0.00</span>
<span class="t" style="left:1617.40px;top:359.00px;font-size:13px;color:#000;-webkit-text-stroke:0.15px #000;transform:scaleX(0.9688);">$0.00</span>
<span class="t" style="left:28.90px;top:384.73px;font-size:14.5px;font-weight:bold;color:#44546A;transform:scaleX(0.9426);">TOTAL</span>
<div style="left:25px;top:402px;width:60px;height:3px;background:#A6C6E6"></div>
<span class="t" style="left:194.20px;top:383.03px;font-size:16.5px;font-weight:bold;color:#000;transform:scaleX(1.0222);">0</span>
<span class="t" style="left:285.20px;top:383.03px;font-size:16.5px;font-weight:bold;color:#000;transform:scaleX(1.0688);">0.00</span>
<span class="t" style="left:385.30px;top:383.03px;font-size:16.5px;font-weight:bold;color:#000;transform:scaleX(1.0780);">$0.00</span>
<span class="t" style="left:497.30px;top:383.03px;font-size:16.5px;font-weight:bold;color:#000;transform:scaleX(1.0780);">$0.00</span>
<span class="t" style="left:560.20px;top:383.03px;font-size:16.5px;font-weight:bold;color:#000;transform:scaleX(1.0945);">#DIV/0!</span>
<span class="t" style="left:687.30px;top:383.03px;font-size:16.5px;font-weight:bold;color:#000;transform:scaleX(1.0780);">$0.00</span>
<span class="t" style="left:810.30px;top:383.03px;font-size:16.5px;font-weight:bold;color:#000;transform:scaleX(1.0780);">$0.00</span>
<span class="t" style="left:890.20px;top:383.03px;font-size:16.5px;font-weight:bold;color:#000;transform:scaleX(1.0945);">#DIV/0!</span>
<span class="t" style="left:1055.20px;top:383.03px;font-size:16.5px;font-weight:bold;color:#000;transform:scaleX(1.0222);">0</span>
<span class="t" style="left:1130.30px;top:383.03px;font-size:16.5px;font-weight:bold;color:#000;transform:scaleX(1.0780);">$0.00</span>
<span class="t" style="left:1271.20px;top:383.03px;font-size:16.5px;font-weight:bold;color:#000;transform:scaleX(1.0222);">0</span>
<span class="t" style="left:1336.30px;top:383.03px;font-size:16.5px;font-weight:bold;color:#000;transform:scaleX(1.0780);">$0.00</span>
<span class="t" style="left:1436.00px;top:383.03px;font-size:16.5px;font-weight:bold;color:#000;transform:scaleX(1.0222);">0</span>
<span class="t" style="left:1517.30px;top:383.03px;font-size:16.5px;font-weight:bold;color:#000;transform:scaleX(1.0780);">$0.00</span>
<span class="t" style="left:1602.30px;top:383.03px;font-size:16.5px;font-weight:bold;color:#000;transform:scaleX(1.0780);">$0.00</span>
<div style="left:85px;top:376px;width:1572px;height:1px;background:#5B9BD5"></div>
<div style="left:85px;top:402px;width:1572px;height:1px;background:#5B9BD5"></div>
<div style="left:85px;top:403px;width:1572px;height:1px;background:#fff"></div>
<div style="left:85px;top:404px;width:1572px;height:1px;background:#5B9BD5"></div>
<span class="t" style="left:27.67px;top:429.76px;font-size:18px;font-weight:bold;color:#44546A;transform:scaleX(0.9289);">EXPENSES/INCOME</span>
<div style="left:25px;top:450px;width:60px;height:3px;background:#5B9BD5"></div>
<span class="t" style="left:27.80px;top:457.73px;font-size:14.5px;font-weight:bold;color:#44546A;transform:scaleX(1.1024);">Month</span>
<span class="t" style="left:87.92px;top:457.73px;font-size:14.5px;font-weight:bold;color:#44546A;transform:scaleX(0.9791);">Expenses</span>
<span class="t" style="left:210.87px;top:457.73px;font-size:14.5px;font-weight:bold;color:#44546A;transform:scaleX(1.0260);">Income</span>
<span class="t" style="left:327.90px;top:457.73px;font-size:14.5px;font-weight:bold;color:#44546A;transform:scaleX(1.0394);">Total</span>
<div style="left:25px;top:475px;width:415px;height:3px;background:#A6C6E6"></div>
<span class="t" style="left:554.95px;top:429.76px;font-size:18px;font-weight:bold;color:#44546A;transform:scaleX(0.9536);">PO Summary</span>
<div style="left:551px;top:450px;width:314px;height:3px;background:#5B9BD5"></div>
<span class="t" style="left:554.80px;top:457.73px;font-size:14.5px;font-weight:bold;color:#44546A;transform:scaleX(1.1024);">Month</span>
<span class="t" style="left:632.88px;top:457.73px;font-size:14.5px;font-weight:bold;color:#44546A;transform:scaleX(1.0250);">PO #</span>
<span class="t" style="left:744.85px;top:457.73px;font-size:14.5px;font-weight:bold;color:#44546A;transform:scaleX(1.0494);">PO Inventory</span>
<div style="left:551px;top:475px;width:314px;height:3px;background:#A6C6E6"></div>
<span class="t" style="left:980.90px;top:429.76px;font-size:18px;font-weight:bold;color:#44546A;transform:scaleX(0.9420);">Transfers</span>
<div style="left:976px;top:450px;width:93px;height:3px;background:#5B9BD5"></div>
<span class="t" style="left:979.80px;top:457.73px;font-size:14.5px;font-weight:bold;color:#44546A;transform:scaleX(1.1024);">Month</span>
<span class="t" style="left:1072.90px;top:457.73px;font-size:14.5px;font-weight:bold;color:#44546A;transform:scaleX(1.0391);">Total Amount</span>
<div style="left:976px;top:475px;width:93px;height:3px;background:#A6C6E6"></div>
<span class="t" style="left:28.60px;top:482.30px;font-size:15px;color:#44546A;-webkit-text-stroke:0.05px #44546A;transform:scaleX(0.8833);">Jan</span>
<div style="left:25px;top:500px;width:60px;height:3px;background:#A6C6E6"></div>
<span class="t" style="left:555.60px;top:482.30px;font-size:15px;color:#44546A;-webkit-text-stroke:0.05px #44546A;transform:scaleX(0.8833);">Jan</span>
<div style="left:551px;top:500px;width:79px;height:3px;background:#A6C6E6"></div>
<span class="t" style="left:980.60px;top:482.30px;font-size:15px;color:#44546A;-webkit-text-stroke:0.05px #44546A;transform:scaleX(0.8833);">Jan</span>
<div style="left:976px;top:500px;width:93px;height:3px;background:#A6C6E6"></div>
<span class="t" style="left:168.40px;top:484.00px;font-size:13px;color:#000;-webkit-text-stroke:0.15px #000;transform:scaleX(0.9688);">$0.00</span>
<span class="t" style="left:284.40px;top:484.00px;font-size:13px;color:#000;-webkit-text-stroke:0.15px #000;transform:scaleX(0.9688);">$0.00</span>
<span class="t" style="left:399.70px;top:484.00px;font-size:13px;font-weight:bold;color:#000;transform:scaleX(1.0094);">$0.00</span>
<span class="t" style="left:731.40px;top:484.00px;font-size:13px;color:#000;-webkit-text-stroke:0.15px #000;">0</span>
<span class="t" style="left:825.40px;top:484.00px;font-size:13px;color:#000;-webkit-text-stroke:0.15px #000;transform:scaleX(0.9688);">$0.00</span>
<span class="t" style="left:1145.40px;top:484.00px;font-size:13px;color:#000;-webkit-text-stroke:0.15px #000;transform:scaleX(0.9688);">$0.00</span>
<span class="t" style="left:27.64px;top:507.30px;font-size:15px;color:#44546A;-webkit-text-stroke:0.05px #44546A;transform:scaleX(0.9560);">Feb</span>
<div style="left:25px;top:525px;width:60px;height:3px;background:#A6C6E6"></div>
<span class="t" style="left:554.64px;top:507.30px;font-size:15px;color:#44546A;-webkit-text-stroke:0.05px #44546A;transform:scaleX(0.9560);">Feb</span>
<div style="left:551px;top:525px;width:79px;height:3px;background:#A6C6E6"></div>
<span class="t" style="left:979.64px;top:507.30px;font-size:15px;color:#44546A;-webkit-text-stroke:0.05px #44546A;transform:scaleX(0.9560);">Feb</span>
<div style="left:976px;top:525px;width:93px;height:3px;background:#A6C6E6"></div>
<span class="t" style="left:168.40px;top:509.00px;font-size:13px;color:#000;-webkit-text-stroke:0.15px #000;transform:scaleX(0.9688);">$0.00</span>
<span class="t" style="left:284.40px;top:509.00px;font-size:13px;color:#000;-webkit-text-stroke:0.15px #000;transform:scaleX(0.9688);">$0.00</span>
<span class="t" style="left:399.70px;top:509.00px;font-size:13px;font-weight:bold;color:#000;transform:scaleX(1.0094);">$0.00</span>
<span class="t" style="left:731.40px;top:509.00px;font-size:13px;color:#000;-webkit-text-stroke:0.15px #000;">0</span>
<span class="t" style="left:825.40px;top:509.00px;font-size:13px;color:#000;-webkit-text-stroke:0.15px #000;transform:scaleX(0.9688);">$0.00</span>
<span class="t" style="left:1145.40px;top:509.00px;font-size:13px;color:#000;-webkit-text-stroke:0.15px #000;transform:scaleX(0.9688);">$0.00</span>
<span class="t" style="left:27.48px;top:532.30px;font-size:15px;color:#44546A;-webkit-text-stroke:0.05px #44546A;transform:scaleX(1.1240);">Mar</span>
<div style="left:25px;top:550px;width:60px;height:3px;background:#A6C6E6"></div>
<span class="t" style="left:554.48px;top:532.30px;font-size:15px;color:#44546A;-webkit-text-stroke:0.05px #44546A;transform:scaleX(1.1240);">Mar</span>
<div style="left:551px;top:550px;width:79px;height:3px;background:#A6C6E6"></div>
<span class="t" style="left:979.48px;top:532.30px;font-size:15px;color:#44546A;-webkit-text-stroke:0.05px #44546A;transform:scaleX(1.1240);">Mar</span>
<div style="left:976px;top:550px;width:93px;height:3px;background:#A6C6E6"></div>
<span class="t" style="left:168.40px;top:534.00px;font-size:13px;color:#000;-webkit-text-stroke:0.15px #000;transform:scaleX(0.9688);">$0.00</span>
<span class="t" style="left:284.40px;top:534.00px;font-size:13px;color:#000;-webkit-text-stroke:0.15px #000;transform:scaleX(0.9688);">$0.00</span>
<span class="t" style="left:399.70px;top:534.00px;font-size:13px;font-weight:bold;color:#000;transform:scaleX(1.0094);">$0.00</span>
<span class="t" style="left:731.40px;top:534.00px;font-size:13px;color:#000;-webkit-text-stroke:0.15px #000;">0</span>
<span class="t" style="left:825.40px;top:534.00px;font-size:13px;color:#000;-webkit-text-stroke:0.15px #000;transform:scaleX(0.9688);">$0.00</span>
<span class="t" style="left:1145.40px;top:534.00px;font-size:13px;color:#000;-webkit-text-stroke:0.15px #000;transform:scaleX(0.9688);">$0.00</span>
<span class="t" style="left:28.60px;top:557.30px;font-size:15px;color:#44546A;-webkit-text-stroke:0.05px #44546A;transform:scaleX(1.0652);">Apr</span>
<div style="left:25px;top:575px;width:60px;height:3px;background:#A6C6E6"></div>
<span class="t" style="left:555.60px;top:557.30px;font-size:15px;color:#44546A;-webkit-text-stroke:0.05px #44546A;transform:scaleX(1.0652);">Apr</span>
<div style="left:551px;top:575px;width:79px;height:3px;background:#A6C6E6"></div>
<span class="t" style="left:980.60px;top:557.30px;font-size:15px;color:#44546A;-webkit-text-stroke:0.05px #44546A;transform:scaleX(1.0652);">Apr</span>
<div style="left:976px;top:575px;width:93px;height:3px;background:#A6C6E6"></div>
<span class="t" style="left:168.40px;top:559.00px;font-size:13px;color:#000;-webkit-text-stroke:0.15px #000;transform:scaleX(0.9688);">$0.00</span>
<span class="t" style="left:284.40px;top:559.00px;font-size:13px;color:#000;-webkit-text-stroke:0.15px #000;transform:scaleX(0.9688);">$0.00</span>
<span class="t" style="left:399.70px;top:559.00px;font-size:13px;font-weight:bold;color:#000;transform:scaleX(1.0094);">$0.00</span>
<span class="t" style="left:731.40px;top:559.00px;font-size:13px;color:#000;-webkit-text-stroke:0.15px #000;">0</span>
<span class="t" style="left:825.40px;top:559.00px;font-size:13px;color:#000;-webkit-text-stroke:0.15px #000;transform:scaleX(0.9688);">$0.00</span>
<span class="t" style="left:1145.40px;top:559.00px;font-size:13px;color:#000;-webkit-text-stroke:0.15px #000;transform:scaleX(0.9688);">$0.00</span>
<span class="t" style="left:27.50px;top:582.30px;font-size:15px;color:#44546A;-webkit-text-stroke:0.05px #44546A;transform:scaleX(1.1037);">May</span>
<div style="left:25px;top:600px;width:60px;height:3px;background:#A6C6E6"></div>
<span class="t" style="left:554.50px;top:582.30px;font-size:15px;color:#44546A;-webkit-text-stroke:0.05px #44546A;transform:scaleX(1.1037);">May</span>
<div style="left:551px;top:600px;width:79px;height:3px;background:#A6C6E6"></div>
<span class="t" style="left:979.50px;top:582.30px;font-size:15px;color:#44546A;-webkit-text-stroke:0.05px #44546A;transform:scaleX(1.1037);">May</span>
<div style="left:976px;top:600px;width:93px;height:3px;background:#A6C6E6"></div>
<span class="t" style="left:168.40px;top:584.00px;font-size:13px;color:#000;-webkit-text-stroke:0.15px #000;transform:scaleX(0.9688);">$0.00</span>
<span class="t" style="left:284.40px;top:584.00px;font-size:13px;color:#000;-webkit-text-stroke:0.15px #000;transform:scaleX(0.9688);">$0.00</span>
<span class="t" style="left:399.70px;top:584.00px;font-size:13px;font-weight:bold;color:#000;transform:scaleX(1.0094);">$0.00</span>
<span class="t" style="left:731.40px;top:584.00px;font-size:13px;color:#000;-webkit-text-stroke:0.15px #000;">0</span>
<span class="t" style="left:825.40px;top:584.00px;font-size:13px;color:#000;-webkit-text-stroke:0.15px #000;transform:scaleX(0.9688);">$0.00</span>
<span class="t" style="left:1145.40px;top:584.00px;font-size:13px;color:#000;-webkit-text-stroke:0.15px #000;transform:scaleX(0.9688);">$0.00</span>
<span class="t" style="left:28.60px;top:607.30px;font-size:15px;color:#44546A;-webkit-text-stroke:0.05px #44546A;transform:scaleX(0.9292);">Jun</span>
<div style="left:25px;top:625px;width:60px;height:3px;background:#A6C6E6"></div>
<span class="t" style="left:555.60px;top:607.30px;font-size:15px;color:#44546A;-webkit-text-stroke:0.05px #44546A;transform:scaleX(0.9292);">Jun</span>
<div style="left:551px;top:625px;width:79px;height:3px;background:#A6C6E6"></div>
<span class="t" style="left:980.60px;top:607.30px;font-size:15px;color:#44546A;-webkit-text-stroke:0.05px #44546A;transform:scaleX(0.9292);">Jun</span>
<div style="left:976px;top:625px;width:93px;height:3px;background:#A6C6E6"></div>
<span class="t" style="left:168.40px;top:609.00px;font-size:13px;color:#000;-webkit-text-stroke:0.15px #000;transform:scaleX(0.9688);">$0.00</span>
<span class="t" style="left:284.40px;top:609.00px;font-size:13px;color:#000;-webkit-text-stroke:0.15px #000;transform:scaleX(0.9688);">$0.00</span>
<span class="t" style="left:399.70px;top:609.00px;font-size:13px;font-weight:bold;color:#000;transform:scaleX(1.0094);">$0.00</span>
<span class="t" style="left:731.40px;top:609.00px;font-size:13px;color:#000;-webkit-text-stroke:0.15px #000;">0</span>
<span class="t" style="left:825.40px;top:609.00px;font-size:13px;color:#000;-webkit-text-stroke:0.15px #000;transform:scaleX(0.9688);">$0.00</span>
<span class="t" style="left:1145.40px;top:609.00px;font-size:13px;color:#000;-webkit-text-stroke:0.15px #000;transform:scaleX(0.9688);">$0.00</span>
<span class="t" style="left:28.60px;top:632.30px;font-size:15px;color:#44546A;-webkit-text-stroke:0.05px #44546A;transform:scaleX(0.9211);">Jul</span>
<div style="left:25px;top:650px;width:60px;height:3px;background:#A6C6E6"></div>
<span class="t" style="left:555.60px;top:632.30px;font-size:15px;color:#44546A;-webkit-text-stroke:0.05px #44546A;transform:scaleX(0.9211);">Jul</span>
<div style="left:551px;top:650px;width:79px;height:3px;background:#A6C6E6"></div>
<span class="t" style="left:980.60px;top:632.30px;font-size:15px;color:#44546A;-webkit-text-stroke:0.05px #44546A;transform:scaleX(0.9211);">Jul</span>
<div style="left:976px;top:650px;width:93px;height:3px;background:#A6C6E6"></div>
<span class="t" style="left:168.40px;top:634.00px;font-size:13px;color:#000;-webkit-text-stroke:0.15px #000;transform:scaleX(0.9688);">$0.00</span>
<span class="t" style="left:284.40px;top:634.00px;font-size:13px;color:#000;-webkit-text-stroke:0.15px #000;transform:scaleX(0.9688);">$0.00</span>
<span class="t" style="left:399.70px;top:634.00px;font-size:13px;font-weight:bold;color:#000;transform:scaleX(1.0094);">$0.00</span>
<span class="t" style="left:731.40px;top:634.00px;font-size:13px;color:#000;-webkit-text-stroke:0.15px #000;">0</span>
<span class="t" style="left:825.40px;top:634.00px;font-size:13px;color:#000;-webkit-text-stroke:0.15px #000;transform:scaleX(0.9688);">$0.00</span>
<span class="t" style="left:1145.40px;top:634.00px;font-size:13px;color:#000;-webkit-text-stroke:0.15px #000;transform:scaleX(0.9688);">$0.00</span>
<span class="t" style="left:28.60px;top:657.30px;font-size:15px;color:#44546A;-webkit-text-stroke:0.05px #44546A;transform:scaleX(1.0346);">Aug</span>
<div style="left:25px;top:675px;width:60px;height:3px;background:#A6C6E6"></div>
<span class="t" style="left:555.60px;top:657.30px;font-size:15px;color:#44546A;-webkit-text-stroke:0.05px #44546A;transform:scaleX(1.0346);">Aug</span>
<div style="left:551px;top:675px;width:79px;height:3px;background:#A6C6E6"></div>
<span class="t" style="left:980.60px;top:657.30px;font-size:15px;color:#44546A;-webkit-text-stroke:0.05px #44546A;transform:scaleX(1.0346);">Aug</span>
<div style="left:976px;top:675px;width:93px;height:3px;background:#A6C6E6"></div>
<span class="t" style="left:168.40px;top:659.00px;font-size:13px;color:#000;-webkit-text-stroke:0.15px #000;transform:scaleX(0.9688);">$0.00</span>
<span class="t" style="left:284.40px;top:659.00px;font-size:13px;color:#000;-webkit-text-stroke:0.15px #000;transform:scaleX(0.9688);">$0.00</span>
<span class="t" style="left:399.70px;top:659.00px;font-size:13px;font-weight:bold;color:#000;transform:scaleX(1.0094);">$0.00</span>
<span class="t" style="left:731.40px;top:659.00px;font-size:13px;color:#000;-webkit-text-stroke:0.15px #000;">0</span>
<span class="t" style="left:825.40px;top:659.00px;font-size:13px;color:#000;-webkit-text-stroke:0.15px #000;transform:scaleX(0.9688);">$0.00</span>
<span class="t" style="left:1145.40px;top:659.00px;font-size:13px;color:#000;-webkit-text-stroke:0.15px #000;transform:scaleX(0.9688);">$0.00</span>
<span class="t" style="left:27.64px;top:682.30px;font-size:15px;color:#44546A;-webkit-text-stroke:0.05px #44546A;transform:scaleX(0.9560);">Sep</span>
<div style="left:25px;top:700px;width:60px;height:3px;background:#A6C6E6"></div>
<span class="t" style="left:554.64px;top:682.30px;font-size:15px;color:#44546A;-webkit-text-stroke:0.05px #44546A;transform:scaleX(0.9560);">Sep</span>
<div style="left:551px;top:700px;width:79px;height:3px;background:#A6C6E6"></div>
<span class="t" style="left:979.64px;top:682.30px;font-size:15px;color:#44546A;-webkit-text-stroke:0.05px #44546A;transform:scaleX(0.9560);">Sep</span>
<div style="left:976px;top:700px;width:93px;height:3px;background:#A6C6E6"></div>
<span class="t" style="left:168.40px;top:684.00px;font-size:13px;color:#000;-webkit-text-stroke:0.15px #000;transform:scaleX(0.9688);">$0.00</span>
<span class="t" style="left:284.40px;top:684.00px;font-size:13px;color:#000;-webkit-text-stroke:0.15px #000;transform:scaleX(0.9688);">$0.00</span>
<span class="t" style="left:399.70px;top:684.00px;font-size:13px;font-weight:bold;color:#000;transform:scaleX(1.0094);">$0.00</span>
<span class="t" style="left:731.40px;top:684.00px;font-size:13px;color:#000;-webkit-text-stroke:0.15px #000;">0</span>
<span class="t" style="left:825.40px;top:684.00px;font-size:13px;color:#000;-webkit-text-stroke:0.15px #000;transform:scaleX(0.9688);">$0.00</span>
<span class="t" style="left:1145.40px;top:684.00px;font-size:13px;color:#000;-webkit-text-stroke:0.15px #000;transform:scaleX(0.9688);">$0.00</span>
<span class="t" style="left:28.60px;top:707.30px;font-size:15px;color:#44546A;-webkit-text-stroke:0.05px #44546A;transform:scaleX(0.9583);">Oct</span>
<div style="left:25px;top:725px;width:60px;height:3px;background:#A6C6E6"></div>
<span class="t" style="left:555.60px;top:707.30px;font-size:15px;color:#44546A;-webkit-text-stroke:0.05px #44546A;transform:scaleX(0.9583);">Oct</span>
<div style="left:551px;top:725px;width:79px;height:3px;background:#A6C6E6"></div>
<span class="t" style="left:980.60px;top:707.30px;font-size:15px;color:#44546A;-webkit-text-stroke:0.05px #44546A;transform:scaleX(0.9583);">Oct</span>
<div style="left:976px;top:725px;width:93px;height:3px;background:#A6C6E6"></div>
<span class="t" style="left:168.40px;top:709.00px;font-size:13px;color:#000;-webkit-text-stroke:0.15px #000;transform:scaleX(0.9688);">$0.00</span>
<span class="t" style="left:284.40px;top:709.00px;font-size:13px;color:#000;-webkit-text-stroke:0.15px #000;transform:scaleX(0.9688);">$0.00</span>
<span class="t" style="left:399.70px;top:709.00px;font-size:13px;font-weight:bold;color:#000;transform:scaleX(1.0094);">$0.00</span>
<span class="t" style="left:731.40px;top:709.00px;font-size:13px;color:#000;-webkit-text-stroke:0.15px #000;">0</span>
<span class="t" style="left:825.40px;top:709.00px;font-size:13px;color:#000;-webkit-text-stroke:0.15px #000;transform:scaleX(0.9688);">$0.00</span>
<span class="t" style="left:1145.40px;top:709.00px;font-size:13px;color:#000;-webkit-text-stroke:0.15px #000;transform:scaleX(0.9688);">$0.00</span>
<span class="t" style="left:27.58px;top:732.30px;font-size:15px;color:#44546A;-webkit-text-stroke:0.05px #44546A;transform:scaleX(1.0192);">Nov</span>
<div style="left:25px;top:750px;width:60px;height:3px;background:#A6C6E6"></div>
<span class="t" style="left:554.58px;top:732.30px;font-size:15px;color:#44546A;-webkit-text-stroke:0.05px #44546A;transform:scaleX(1.0192);">Nov</span>
<div style="left:551px;top:750px;width:79px;height:3px;background:#A6C6E6"></div>
<span class="t" style="left:979.58px;top:732.30px;font-size:15px;color:#44546A;-webkit-text-stroke:0.05px #44546A;transform:scaleX(1.0192);">Nov</span>
<div style="left:976px;top:750px;width:93px;height:3px;background:#A6C6E6"></div>
<span class="t" style="left:168.40px;top:734.00px;font-size:13px;color:#000;-webkit-text-stroke:0.15px #000;transform:scaleX(0.9688);">$0.00</span>
<span class="t" style="left:284.40px;top:734.00px;font-size:13px;color:#000;-webkit-text-stroke:0.15px #000;transform:scaleX(0.9688);">$0.00</span>
<span class="t" style="left:399.70px;top:734.00px;font-size:13px;font-weight:bold;color:#000;transform:scaleX(1.0094);">$0.00</span>
<span class="t" style="left:731.40px;top:734.00px;font-size:13px;color:#000;-webkit-text-stroke:0.15px #000;">0</span>
<span class="t" style="left:825.40px;top:734.00px;font-size:13px;color:#000;-webkit-text-stroke:0.15px #000;transform:scaleX(0.9688);">$0.00</span>
<span class="t" style="left:1145.40px;top:734.00px;font-size:13px;color:#000;-webkit-text-stroke:0.15px #000;transform:scaleX(0.9688);">$0.00</span>
<span class="t" style="left:27.62px;top:757.30px;font-size:15px;color:#44546A;-webkit-text-stroke:0.05px #44546A;transform:scaleX(0.9760);">Dec</span>
<span class="t" style="left:554.62px;top:757.30px;font-size:15px;color:#44546A;-webkit-text-stroke:0.05px #44546A;transform:scaleX(0.9760);">Dec</span>
<span class="t" style="left:979.62px;top:757.30px;font-size:15px;color:#44546A;-webkit-text-stroke:0.05px #44546A;transform:scaleX(0.9760);">Dec</span>
<span class="t" style="left:168.40px;top:759.00px;font-size:13px;color:#000;-webkit-text-stroke:0.15px #000;transform:scaleX(0.9688);">$0.00</span>
<span class="t" style="left:284.40px;top:759.00px;font-size:13px;color:#000;-webkit-text-stroke:0.15px #000;transform:scaleX(0.9688);">$0.00</span>
<span class="t" style="left:399.70px;top:759.00px;font-size:13px;font-weight:bold;color:#000;transform:scaleX(1.0094);">$0.00</span>
<span class="t" style="left:731.40px;top:759.00px;font-size:13px;color:#000;-webkit-text-stroke:0.15px #000;">0</span>
<span class="t" style="left:825.40px;top:759.00px;font-size:13px;color:#000;-webkit-text-stroke:0.15px #000;transform:scaleX(0.9688);">$0.00</span>
<span class="t" style="left:1145.40px;top:759.00px;font-size:13px;color:#000;-webkit-text-stroke:0.15px #000;transform:scaleX(0.9688);">$0.00</span>
<!--clip-->
<div style="left:1658px;top:0px;width:20px;height:767px;background:#E6E6E6"></div>
<div style="left:1661px;top:7px;width:15px;height:759px;background:#DADADA"></div>
<div style="left:1661px;top:7px;width:15px;height:15px;background:#fff;border:1px solid #ABABAB"></div>
<svg style="left:1661px;top:7px" width="15" height="15"><polygon points="4,9.5 11,9.5 7.5,5.5" fill="#606060"/></svg>
<div style="left:1661px;top:22px;width:15px;height:624px;background:#fff;border:1px solid #ABABAB"></div>
<div style="left:1661px;top:752px;width:15px;height:15px;background:#fff;border:1px solid #ABABAB"></div>
<svg style="left:1661px;top:752px" width="15" height="15"><polygon points="4,5.5 11,5.5 7.5,9.5" fill="#606060"/></svg>
<div style="left:0px;top:767px;width:1678px;height:27px;background:#E6E6E6"></div>
<div style="left:0px;top:766px;width:1658px;height:1px;background:#ABABAB"></div>
<svg style="left:0;top:767px" width="99" height="27"><polygon points="30.5,9 30.5,16.5 26,12.75" fill="#C0C0C0"/><polygon points="55,9 55,16.5 59.5,12.75" fill="#217346"/></svg>
<div style="left:99px;top:770px;width:1px;height:20px;background:#8C8C8C"></div>
<div style="left:102px;top:769px;width:92px;height:22px;background:#FFFFFF"></div>
<span class="t" style="left:111.95px;top:774.42px;font-size:12.5px;color:#000;transform:scaleX(1.0476);color:#000">Instructions</span>
<div style="left:199px;top:769px;width:86px;height:22px;background:#70AD47"></div>
<span class="t" style="left:208.64px;top:774.42px;font-size:12.5px;color:#000;transform:scaleX(1.0600);color:#000">Dashboard</span>
<div style="left:403px;top:769px;width:110px;height:22px;background:#FFC000"></div>
<span class="t" style="left:413.25px;top:774.42px;font-size:12.5px;color:#000;transform:scaleX(1.0463);color:#000">Prod Summary</span>
<div style="left:518px;top:769px;width:75px;height:22px;background:#A5A5A5"></div>
<span class="t" style="left:528.72px;top:774.42px;font-size:12.5px;color:#000;transform:scaleX(0.9824);color:#000">Price List</span>
<div style="left:598px;top:769px;width:105px;height:22px;background:#C00000"></div>
<span class="t" style="left:608.14px;top:774.42px;font-size:12.5px;color:#000;transform:scaleX(1.0566);color:#fff">SuppliesTools</span>
<span class="t" style="left:717.20px;top:774.42px;font-size:12.5px;color:#000;transform:scaleX(1.0047);color:#404040">Returns</span>
<div style="left:779px;top:769px;width:40px;height:22px;background:#5B9BD5"></div>
<span class="t" style="left:789.20px;top:774.42px;font-size:12.5px;color:#000;transform:scaleX(0.9100);color:#000">Jan</span>
<div style="left:824px;top:769px;width:68px;height:22px;background:#5B9BD5"></div>
<span class="t" style="left:834.10px;top:774.42px;font-size:12.5px;color:#000;transform:scaleX(0.9500);color:#000">Jan POs</span>
<div style="left:897px;top:769px;width:41px;height:22px;background:#5B9BD5"></div>
<div style="left:897px;top:767px;width:41px;height:26px;overflow:hidden">
<span class="t" style="left:11.50px;top:7.42px;font-size:12.5px;color:#000;transform:scaleX(0.97)">Jan Summary</span></div>
<div style="left:196px;top:770px;width:1px;height:20px;background:#8C8C8C"></div>
<div style="left:515px;top:770px;width:1px;height:20px;background:#8C8C8C"></div>
<div style="left:595px;top:770px;width:1px;height:20px;background:#8C8C8C"></div>
<div style="left:705px;top:770px;width:1px;height:20px;background:#8C8C8C"></div>
<div style="left:776px;top:770px;width:1px;height:20px;background:#8C8C8C"></div>
<div style="left:821px;top:770px;width:1px;height:20px;background:#8C8C8C"></div>
<div style="left:894px;top:770px;width:1px;height:20px;background:#8C8C8C"></div>
<div style="left:287px;top:766px;width:114px;height:25px;background:#fff;border-left:1px solid #9E9E9E;border-right:1px solid #9E9E9E"></div>
<div style="left:290px;top:769px;width:108px;height:19px;background:linear-gradient(#FFFFFF 0%,#F3EFE4 35%,#D5C9A8 100%)"></div>
<div style="left:287px;top:789px;width:114px;height:2px;background:#217346"></div>
<span class="t" style="left:299.40px;top:774.42px;font-size:12.5px;font-weight:bold;color:#1D6B40;-webkit-text-stroke:0.15px #1D6B40;transform:scaleX(1.0161);">Year Summary</span>
<div style="left:947px;top:782px;width:2px;height:2px;background:#217346"></div>
<div style="left:951px;top:782px;width:2px;height:2px;background:#217346"></div>
<div style="left:955px;top:782px;width:2px;height:2px;background:#217346"></div>
<svg style="left:968px;top:769px" width="22" height="22"><circle cx="10.9" cy="10.8" r="7.4" fill="none" stroke="#707070" stroke-width="1.2"/><rect x="10" y="6.8" width="2" height="8" fill="#6A6A6A"/><rect x="7" y="9.8" width="8" height="2" fill="#6A6A6A"/></svg>
<div style="left:1007px;top:775px;width:2px;height:2px;background:#A8A8A8"></div>
<div style="left:1007px;top:779px;width:2px;height:2px;background:#A8A8A8"></div>
<div style="left:1007px;top:783px;width:2px;height:2px;background:#A8A8A8"></div>
<div style="left:1024px;top:773px;width:634px;height:15px;background:#DADADA"></div>
<div style="left:1024px;top:773px;width:15px;height:15px;background:#fff;border:1px solid #ABABAB"></div>
<svg style="left:1024px;top:773px" width="15" height="15"><polygon points="9.5,4 9.5,11 5.5,7.5" fill="#606060"/></svg>
<div style="left:1039px;top:773px;width:402px;height:15px;background:#fff;border:1px solid #ABABAB"></div>
<div style="left:1643px;top:773px;width:15px;height:15px;background:#fff;border:1px solid #ABABAB"></div>
<svg style="left:1643px;top:773px" width="15" height="15"><polygon points="5.5,4 5.5,11 9.5,7.5" fill="#606060"/></svg>
<div style="left:0px;top:794px;width:1678px;height:1px;background:#C6C6C6"></div>
<div style="left:0px;top:795px;width:1678px;height:21px;background:#F1F1F1"></div>
<span class="t" style="left:5.73px;top:799.69px;font-size:11px;color:#444;transform:scaleX(0.9677);">Ready</span>
<svg style="left:0;top:794px" width="80" height="22" shape-rendering="crispEdges"><rect x="64" y="5" width="6" height="3" fill="#767676"/><rect x="58" y="11" width="1" height="6" fill="#767676"/><rect x="58" y="16" width="12" height="1" fill="#767676"/><rect x="69" y="5" width="1" height="12" fill="#767676"/><rect x="60" y="12" width="2" height="1" fill="#767676"/><rect x="63" y="12" width="2" height="1" fill="#767676"/><rect x="66" y="12" width="2" height="1" fill="#767676"/><rect x="60" y="14" width="2" height="1" fill="#767676"/><rect x="63" y="14" width="2" height="1" fill="#767676"/><rect x="66" y="14" width="2" height="1" fill="#767676"/><rect x="63" y="10" width="2" height="1" fill="#767676"/><rect x="66" y="10" width="2" height="1" fill="#767676"/><circle cx="59.8" cy="7" r="3" fill="#767676" shape-rendering="auto"/></svg>
<span class="t" style="left:1199.00px;top:799.69px;font-size:11px;color:#444;transform:scaleX(0.9943);">Average: 0</span>
<span class="t" style="left:1268.50px;top:799.69px;font-size:11px;color:#444;transform:scaleX(1.0188);">Count: 14</span>
<span class="t" style="left:1334.40px;top:799.69px;font-size:11px;color:#444;transform:scaleX(0.9457);">Sum: 0</span>
<div style="left:1387px;top:795px;width:38px;height:21px;background:#C8C8C8"></div>
<svg style="left:1394px;top:795px" width="100" height="21" shape-rendering="crispEdges"><rect x="5" y="3" width="13" height="13" fill="#E8E8E8"/><rect x="5" y="3" width="1" height="13" fill="#6B6B6B"/><rect x="9" y="3" width="1" height="13" fill="#6B6B6B"/><rect x="13" y="3" width="1" height="13" fill="#6B6B6B"/><rect x="17" y="3" width="1" height="13" fill="#6B6B6B"/><rect x="5" y="3" width="13" height="1" fill="#6B6B6B"/><rect x="5" y="7" width="13" height="1" fill="#6B6B6B"/><rect x="5" y="11" width="13" height="1" fill="#6B6B6B"/><rect x="5" y="15" width="13" height="1" fill="#6B6B6B"/><rect x="43.5" y="3.5" width="13" height="12" fill="#fff" stroke="#6B6B6B"/><rect x="46.5" y="5.5" width="7" height="8" fill="none" stroke="#6B6B6B"/><rect x="48" y="7" width="4" height="1" fill="#6B6B6B"/><rect x="48" y="9" width="4" height="1" fill="#6B6B6B"/><rect x="48" y="11" width="4" height="1" fill="#6B6B6B"/><rect x="81.5" y="3.5" width="13" height="12" fill="#fff" stroke="#6B6B6B"/><rect x="85" y="3" width="1" height="8" fill="#6B6B6B"/><rect x="89" y="3" width="1" height="8" fill="#6B6B6B"/><rect x="81" y="10" width="9" height="1" fill="#6B6B6B"/></svg>
<div style="left:1506px;top:804px;width:6px;height:2px;background:#555"></div>
<div style="left:1516px;top:804px;width:100px;height:1px;background:#A0A0A0"></div>
<div style="left:1564px;top:799px;width:4px;height:11px;background:#555"></div>
<div style="left:1620px;top:804px;width:8px;height:2px;background:#555"></div>
<div style="left:1623px;top:801px;width:2px;height:8px;background:#555"></div>
<span class="t" style="left:1641.96px;top:799.69px;font-size:11px;color:#444;transform:scaleX(1.0370);">100%</span></body></html>
